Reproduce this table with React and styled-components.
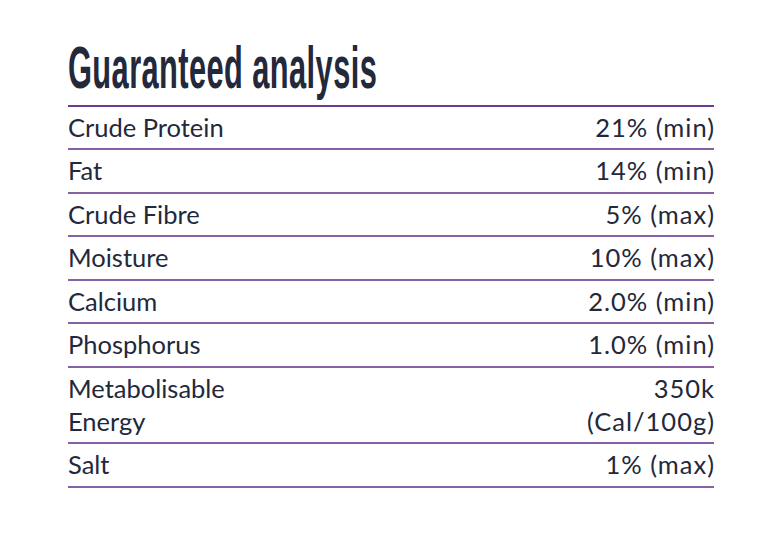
import React from "react";
import styled, { createGlobalStyle } from "styled-components";

const Global = createGlobalStyle`
  html, body { margin: 0; padding: 0; background: #ffffff; }
  body { font-family: "Lato", "Noto Sans", sans-serif; color: #23283b; }
`;

const Page = styled.div`
  width: 782px;
  height: 540px;
  box-sizing: border-box;
  padding: 30px 68px 0 68px;
  background: #fff;
`;

const Title = styled.h1`
  margin: 0;
  height: 76.5px;
  display: flex;
  align-items: flex-end;
  font-family: "Liberation Sans Narrow", "Liberation Sans", sans-serif;
  font-weight: 700;
  font-size: 36px;
  line-height: 1;
  letter-spacing: 0.5px;
  color: #23283b;
  border-bottom: 2.5px solid #6a3d8e;
  box-sizing: border-box;
`;

const TitleText = styled.span`
  display: inline-block;
  transform: scale(0.855, 1.65);
  transform-origin: bottom left;
  margin-bottom: 7px;
`;

const Table = styled.div`
  display: flex;
  flex-direction: column;
`;

const Row = styled.div`
  display: flex;
  justify-content: space-between;
  align-items: center;
  padding: 4px 0 4.5px;
  border-bottom: 2px solid #8760a6;
  font-size: 25.5px;
  line-height: 33px;
`;

const Label = styled.div`
  text-align: left;
`;

const Value = styled.div`
  text-align: right;
  letter-spacing: 1px;
  margin-right: -1px;
`;

const rows = [
  [["Crude Protein"], ["21% (min)"]],
  [["Fat"], ["14% (min)"]],
  [["Crude Fibre"], ["5% (max)"]],
  [["Moisture"], ["10% (max)"]],
  [["Calcium"], ["2.0% (min)"]],
  [["Phosphorus"], ["1.0% (min)"]],
  [["Metabolisable", "Energy"], ["350k", "(Cal/100g)"]],
  [["Salt"], ["1% (max)"]],
];

const Lines = ({ lines }) =>
  lines.map((l, i) => (
    <React.Fragment key={i}>
      {i > 0 && <br />}
      {l}
    </React.Fragment>
  ));

export default function App() {
  return (
    <>
      <Global />
      <Page>
        <Title>
          <TitleText>Guaranteed analysis</TitleText>
        </Title>
        <Table>
          {rows.map(([label, value], i) => (
            <Row key={i}>
              <Label>
                <Lines lines={label} />
              </Label>
              <Value>
                <Lines lines={value} />
              </Value>
            </Row>
          ))}
        </Table>
      </Page>
    </>
  );
}
